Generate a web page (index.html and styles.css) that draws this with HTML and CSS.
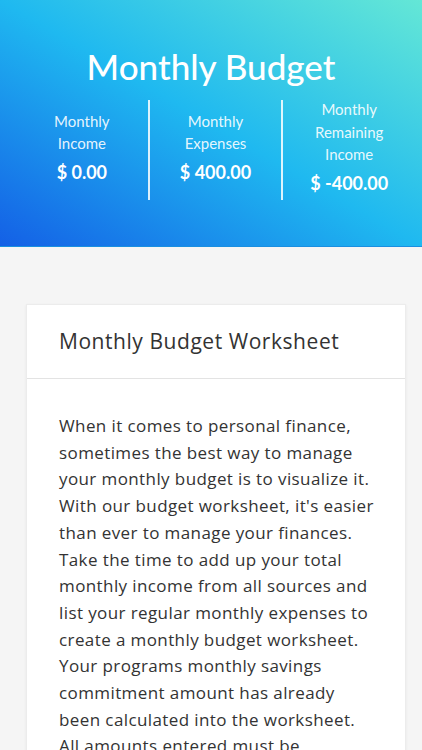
FILE: index.html
```html
<!DOCTYPE html>
<html lang="en">
  <head>
    <meta charset="UTF-8" />
    <meta name="viewport" content="width=device-width, initial-scale=1.0" />
    <title>Monthly Budget</title>
    <link rel="stylesheet" href="styles.css">
  </head>
  <body>
    <div class="hero">
      <h1>Monthly Budget</h1>
      <div class="totals">
        <div class="total">
          <div class="label">Monthly<br />Income</div>
          <div class="amount">$ 0.00</div>
        </div>
        <div class="total">
          <div class="label">Monthly<br />Expenses</div>
          <div class="amount">$ 400.00</div>
        </div>
        <div class="total">
          <div class="label">Monthly<br />Remaining<br />Income</div>
          <div class="amount">$ -400.00</div>
        </div>
      </div>
    </div>
    <div class="content">
      <div class="card">
        <div class="cardHeader">Monthly Budget Worksheet</div>
        <div class="cardBody">
          <p>
            When it comes to personal finance, sometimes the best way to
            manage your monthly budget is to visualize it. With our budget
            worksheet, it's easier than ever to manage your finances. Take
            the time to add up your total monthly income from all sources and
            list your regular monthly expenses to create a monthly budget
            worksheet. Your programs monthly savings commitment amount has
            already been calculated into the worksheet. All amounts entered
            must be expressed as monthly amounts.
          </p>
        </div>
      </div>
    </div>
  </body>
</html>
```

FILE: styles.css
```css
body {
  margin: 0;
  font-family: Lato, "Open Sans", sans-serif;
  background-color: #f5f5f5;
  color: #333;
}

.hero {
  height: 247px;
  box-sizing: border-box;
  padding-top: 45px;
  background: linear-gradient(to top right, #1460e6 0%, #1fb9f0 50%, #64e7d6 100%);
  border-bottom: 1px solid #1a8fe0;
  color: #fff;
  text-align: center;
}

h1 {
  margin: 0;
  font-size: 35px;
  font-weight: 500;
  line-height: 42px;
}

.totals {
  display: flex;
  margin: 13px 7px 0 16px;
}

.total {
  flex: 1;
  height: 100px;
  display: flex;
  flex-direction: column;
  justify-content: center;
  padding-bottom: 8px;
  box-sizing: border-box;
}

.total + .total {
  border-left: 2px solid rgba(255, 255, 255, 0.85);
}

.label {
  font-size: 15px;
  line-height: 22.5px;
  color: rgba(255, 255, 255, 0.9);
}

.amount {
  margin-top: 6px;
  font-size: 18px;
  font-weight: 700;
  line-height: 22px;
}

.content {
  padding: 57px 16px 0 26px;
}

.card {
  background-color: #fff;
  border: 1px solid #ececec;
  box-shadow: 0 1px 3px rgba(0, 0, 0, 0.06);
}

.cardHeader {
  height: 74px;
  box-sizing: border-box;
  padding: 22px 32px 0;
  font-family: "Open Sans", sans-serif;
  font-size: 21px;
  letter-spacing: 0.55px;
  border-bottom: 1px solid #e3e3e3;
}

.cardBody {
  padding: 34px 30px 30px 32px;
}

.cardBody p {
  margin: 0;
  font-family: "Open Sans", sans-serif;
  font-size: 17px;
  letter-spacing: 0.4px;
  line-height: 26.7px;
}
```
